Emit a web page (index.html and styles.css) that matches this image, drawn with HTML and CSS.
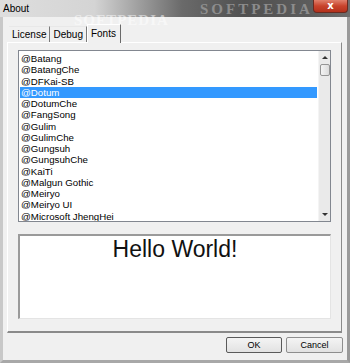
FILE: index.html
```html
<!DOCTYPE html>
<html lang="en">
<head>
  <meta charset="UTF-8">
  <title>About</title>
  <link rel="stylesheet" href="styles.css">
</head>
<body>
  <div class="window">
    <!-- title bar -->
    <div class="titlebar">
      <span class="title">About</span>
      <span class="mark">SOFTPEDIA</span>
      <span class="close">x</span>
    </div>

    <div class="body">
      <!-- tabs -->
      <div class="tabs">
        <span class="tab">License</span>
        <span class="tab">Debug</span>
        <span class="tab active">Fonts</span>
      </div>

      <div class="panel">
        <div class="listbox">
          <ul class="fonts">
            <li>@Batang</li>
            <li>@BatangChe</li>
            <li>@DFKai-SB</li>
            <li class="selected">@Dotum</li>
            <li>@DotumChe</li>
            <li>@FangSong</li>
            <li>@Gulim</li>
            <li>@GulimChe</li>
            <li>@Gungsuh</li>
            <li>@GungsuhChe</li>
            <li>@KaiTi</li>
            <li>@Malgun Gothic</li>
            <li>@Meiryo</li>
            <li>@Meiryo UI</li>
            <li>@Microsoft JhengHei</li>
          </ul>
          <div class="scrollbar">
            <span class="arrow up"></span>
            <span class="thumb"></span>
            <span class="track"></span>
            <span class="arrow down"></span>
          </div>
        </div>
        <div class="preview">Hello World!</div>
      </div>

      <div class="buttons">
        <button class="btn default">OK</button>
        <button class="btn">Cancel</button>
      </div>
    </div>

    <!-- watermark over the tab area -->
    <span class="wm-big">SOFTPEDIA</span>
  </div>
</body>
</html>
```

FILE: styles.css
```css
* {
  margin: 0;
  padding: 0;
  box-sizing: border-box;
}
body {
  font-family: "Liberation Sans", Arial, sans-serif;
  background: #f0f0f0;
  color: #000;
}
.window {
  position: relative;
  width: 350px;
  height: 363px;
  display: flex;
  flex-direction: column;
  background: #f0f0f0;
  overflow: hidden;
}
/* title bar */
.titlebar {
  position: relative;
  height: 17px;
  display: flex;
  align-items: center;
  padding-left: 3px;
  background: linear-gradient(90deg, #dedede 0%, #d4d4d4 27%, #a6a6a6 38%, #6a6a6a 52%, #505050 70%, #5c5c5c 88%, #6e6e6e 100%);
}
.title {
  font-size: 10px;
  color: #000;
}
.mark {
  position: absolute;
  left: 200px;
  top: 1px;
  font-family: "Liberation Serif", serif;
  font-weight: bold;
  font-size: 15px;
  line-height: 16px;
  letter-spacing: 3px;
  color: #9a9a9a;
  opacity: 0.8;
}
.close {
  position: absolute;
  right: 2px;
  top: 0;
  width: 35px;
  height: 13px;
  border: 1px solid #6b2a20;
  border-top: none;
  border-radius: 0 0 4px 4px;
  background: linear-gradient(#e0806c, #c8432c 50%, #b3311c);
  color: #fff;
  font-family: "DejaVu Sans", sans-serif;
  font-weight: bold;
  font-size: 10px;
  line-height: 11px;
  text-align: center;
}
/* dialog body */
.body {
  flex: 1;
  display: flex;
  flex-direction: column;
  padding: 7px 5px 0 4px;
  border-left: 3px solid #c8c8c8;
  border-right: 3px solid #9a9a9a;
  border-bottom: 3px solid #a8a8a8;
}
.tabs {
  display: flex;
  align-items: flex-end;
  height: 18px;
  padding-left: 2px;
  font-size: 10px;
}
.tab {
  height: 16px;
  line-height: 15px;
  padding: 0 3px;
  border-right: 1px solid #7a7a7a;
  border-top: 1px solid #e8e8e8;
}
.tab.active {
  height: 19px;
  line-height: 17px;
  margin-bottom: -1px;
  position: relative;
  z-index: 1;
  padding: 0 4px 0 3px;
  background: #f0f0f0;
  border-left: 1px solid #fff;
  border-top: 1px solid #fff;
  border-right: 1px solid #6a6a6a;
}
.panel {
  height: 291px;
  display: flex;
  flex-direction: column;
  padding: 7px 10px 12px 10px;
  border: 1px solid #fff;
  border-right: 1px solid #8a8a8a;
  border-bottom: 2px solid #8a8a8a;
  background: #f0f0f0;
}
.listbox {
  height: 172px;
  display: flex;
  border: 1px solid #828790;
  background: #fff;
}
.fonts {
  flex: 1;
  list-style: none;
  padding: 2px 1px 0 1px;
  font-size: 9.7px;
  overflow: hidden;
}
.fonts li {
  height: 11.25px;
  line-height: 11.25px;
  padding-left: 1px;
  white-space: nowrap;
}
.fonts li.selected {
  background: #3399ff;
  color: #fff;
}
.scrollbar {
  width: 12px;
  display: flex;
  flex-direction: column;
  align-items: center;
  background: #eaeaea;
  border-left: 1px solid #f4f4f4;
}
.arrow {
  width: 0;
  height: 0;
  margin: 5px 0;
  border-left: 3px solid transparent;
  border-right: 3px solid transparent;
}
.arrow.up {
  border-bottom: 3px solid #333;
}
.arrow.down {
  border-top: 3px solid #333;
}
.thumb {
  width: 10px;
  height: 12px;
  border: 1px solid #959595;
  border-radius: 2px;
  background: linear-gradient(90deg, #f4f4f4, #dcdcdc);
}
.track {
  flex: 1;
}
.preview {
  height: 86px;
  margin-top: 12px;
  text-align: center;
  font-size: 23px;
  line-height: 27px;
  color: #111;
  background: #fff;
  border-top: 2px solid #9a9a9a;
  border-left: 2px solid #9a9a9a;
  border-right: 1px solid #e4e4e4;
  border-bottom: 1px solid #e4e4e4;
}
/* buttons */
.buttons {
  display: flex;
  justify-content: flex-end;
  gap: 4px;
  padding-top: 4px;
  margin-right: -1px;
}
.btn {
  width: 57px;
  height: 16px;
  font-family: "Liberation Sans", Arial, sans-serif;
  font-size: 9px;
  color: #000;
  background: linear-gradient(#f4f4f4, #e2e2e2);
  border: 1px solid #8e8e8e;
  border-radius: 2px;
}
.btn.default {
  width: 56px;
  border: 1px solid #5a5a5a;
}
/* watermark */
.wm-big {
  position: absolute;
  left: 74px;
  top: 12px;
  font-family: "Liberation Serif", serif;
  font-weight: bold;
  font-size: 15px;
  letter-spacing: 1px;
  color: #fff;
  opacity: 0.5;
  pointer-events: none;
}
```
